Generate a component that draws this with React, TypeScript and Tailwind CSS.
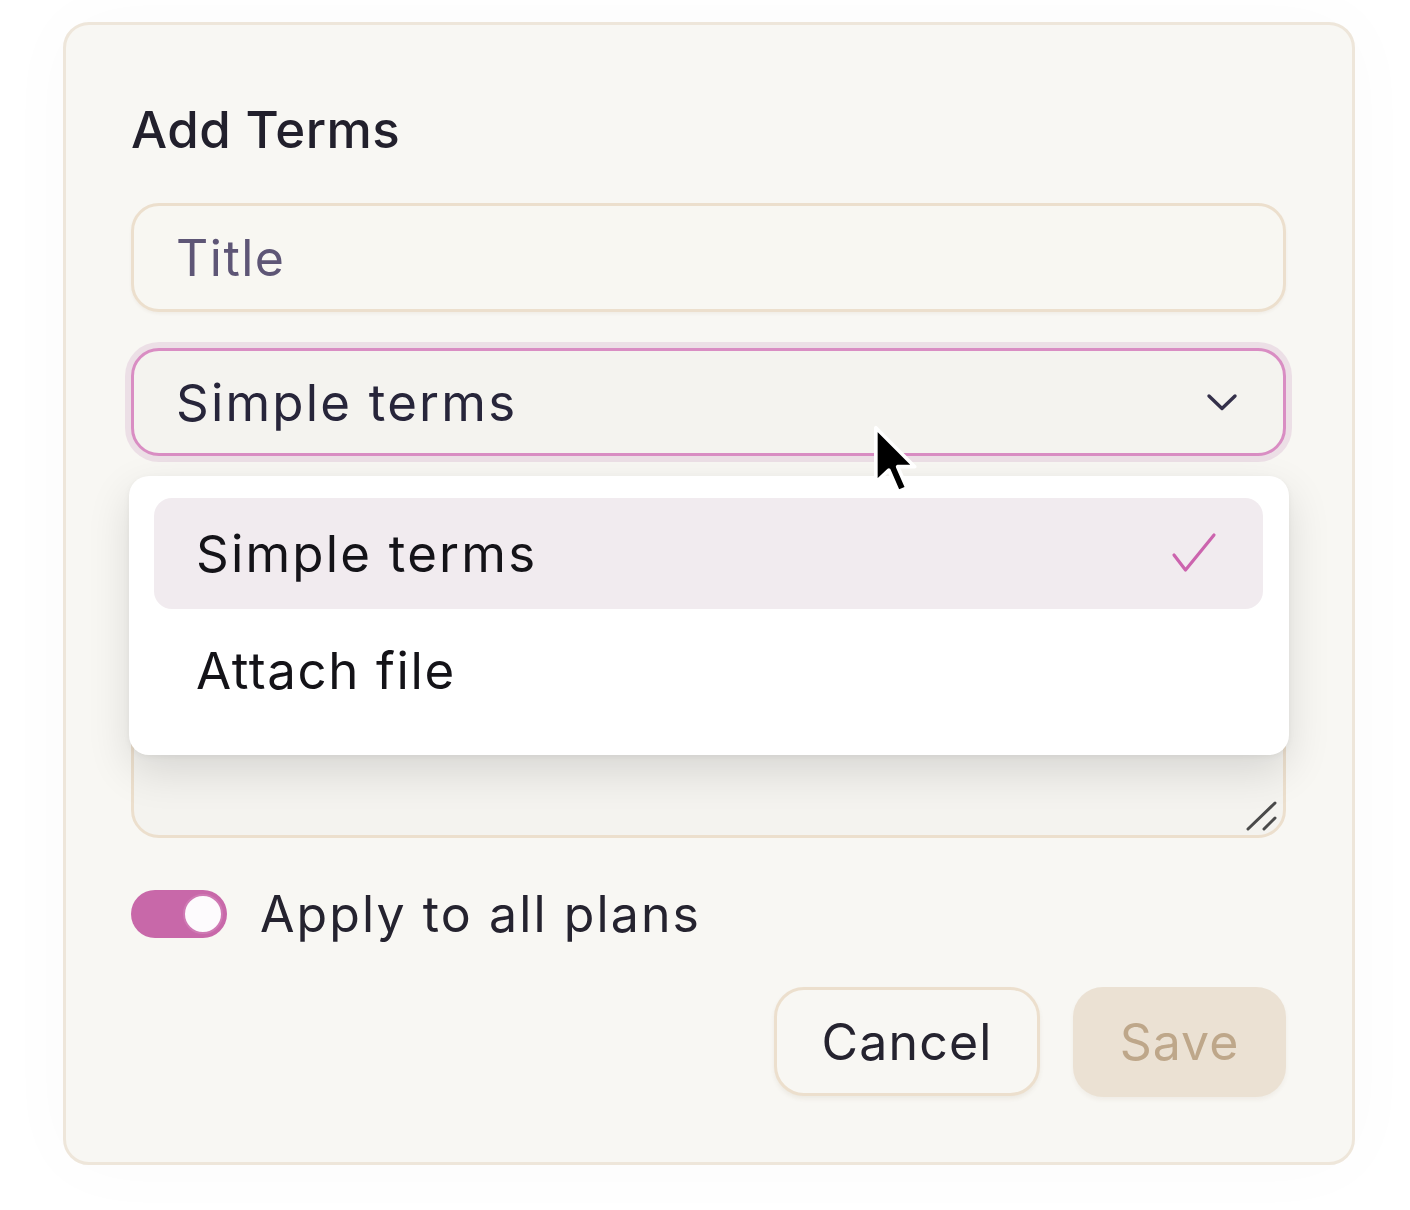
const font = { fontFamily: 'Inter, "Noto Sans", sans-serif' }

function Chevron() {
  return (
    <svg width="34" height="22" viewBox="0 0 34 22" className="shrink-0">
      <path d="M4 5 L17 17.5 L30 5" fill="none" stroke="#34304a" strokeWidth="3.4" strokeLinecap="round" strokeLinejoin="round" />
    </svg>
  )
}

function CheckMark() {
  return (
    <svg width="48" height="46" viewBox="0 0 48 46" className="shrink-0">
      <path d="M3 24 L14.5 39 L43 4" fill="none" stroke="#cc64ae" strokeWidth="3.2" strokeLinecap="round" strokeLinejoin="round" />
    </svg>
  )
}

function ResizeHandle() {
  return (
    <svg width="34" height="32" viewBox="0 0 34 32" className="absolute right-[4px] bottom-[3px]">
      <line x1="3" y1="29" x2="30" y2="3" stroke="#4a4a4a" strokeWidth="3" strokeLinecap="round" />
      <line x1="19" y1="29" x2="30" y2="18" stroke="#4a4a4a" strokeWidth="3" strokeLinecap="round" />
    </svg>
  )
}

function Cursor() {
  return (
    <svg width="52" height="83" viewBox="0 0 20 32" className="absolute left-[868px] top-[420px] z-20">
      <path
        d="M3 3 L3 24 L8 19.3 L11.6 27.6 L15 26.2 L11.4 18 L18 18 Z"
        fill="#000"
        stroke="#fff"
        strokeWidth="1.4"
        strokeLinejoin="round"
      />
    </svg>
  )
}

export default function App() {
  return (
    <div className="relative min-h-screen bg-white pt-[22px] pl-[63px]" style={font}>
      <div className="w-[1292px] h-[1143px] rounded-[26px] border-[3px] border-[#eee6da] bg-[#f8f7f3] pl-[65px] pr-[66px] pt-[75px] shadow-[0_0_80px_rgba(0,0,0,0.025)]">
        {/* Heading */}
        <h2 className="h-[60px] leading-[60px] text-[51px] font-medium text-[#22202c] tracking-[0.5px]">
          Add Terms
        </h2>

        {/* Title */}
        <div className="mt-[43px] h-[109px] rounded-[28px] border-[3px] border-[#ecdfcd] bg-[#f8f7f2] pl-[42px] flex items-center shadow-[0_2px_3px_rgba(120,90,50,0.06)]">
          <span className="text-[50px] leading-none text-[#5e5676] tracking-[1.5px]">Title</span>
        </div>

        {/* Type select + open menu */}
        <div className="relative mt-[36px]">
          <div className="h-[108px] rounded-[28px] border-[3px] border-[#d98dc3] bg-[#f4f3ef] pl-[42px] pr-[44px] flex items-center justify-between shadow-[0_0_0_6px_#ecdfe6]">
            <span className="text-[51px] leading-none text-[#27253a] tracking-[2.2px]">Simple terms</span>
            <Chevron />
          </div>

          <div className="absolute z-10 left-[-2px] right-[-3px] top-[128px] h-[279px] rounded-[20px] bg-white pt-[22px] pb-[29px] pl-[25px] pr-[26px] flex flex-col gap-[6px] shadow-[0_16px_44px_rgba(0,0,0,0.12),0_2px_6px_rgba(0,0,0,0.05)]">
            <div className="h-[111px] rounded-[18px] bg-[#f1ebef] pl-[42px] pr-[44px] flex items-center justify-between">
              <span className="text-[51px] leading-none text-[#141318] tracking-[2.2px]">Simple terms</span>
              <CheckMark />
            </div>
            <div className="h-[111px] rounded-[18px] pl-[42px] flex items-center">
              <span className="text-[51px] leading-none text-[#141318] tracking-[1.6px]">Attach file</span>
            </div>
          </div>
        </div>

        {/* Content textarea (behind menu) */}
        <div className="relative mt-[36px] h-[346px] rounded-[28px] border-[3px] border-[#ecdfcd] bg-[#f4f3ef]">
          <ResizeHandle />
        </div>

        {/* Apply toggle */}
        <div className="mt-[52px] h-[48px] flex items-center gap-[33px]">
          <div className="relative w-[96px] h-[48px] rounded-full bg-[#c868a9] shrink-0">
            <div className="absolute right-[4px] top-[4px] w-[40px] h-[40px] rounded-full bg-[#fdfbfd] border-[2px] border-[#cf7ab4]" />
          </div>
          <span className="text-[50px] leading-none text-[#25232f] tracking-[2.1px]">Apply to all plans</span>
        </div>

        {/* Actions */}
        <div className="mt-[49px] flex justify-end gap-[33px]">
          <button className="w-[266px] h-[109px] rounded-[30px] border-[3px] border-[#ecdfcd] bg-[#f8f7f3] text-[50px] leading-none text-[#25232f] tracking-[1.2px] shadow-[0_3px_4px_rgba(120,90,50,0.08)]">
            Cancel
          </button>
          <button className="w-[213px] h-[110px] rounded-[30px] bg-[#ebe1d3] text-[50px] leading-none text-[#bea78a] tracking-[1px] shadow-[0_3px_4px_rgba(120,90,50,0.06)]">
            Save
          </button>
        </div>
      </div>
      <Cursor />
    </div>
  )
}
